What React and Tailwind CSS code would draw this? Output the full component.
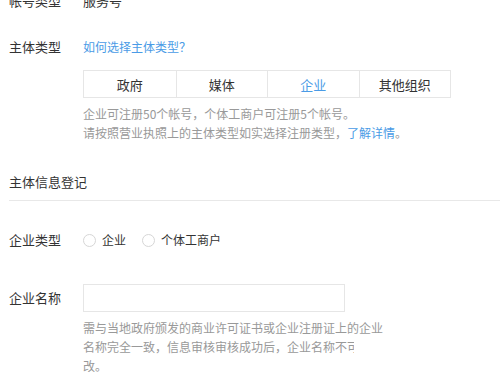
import React, { useState } from "react";

const font = { fontFamily: '"Noto Sans CJK SC", "Noto Sans", sans-serif' };

export default function App() {
  const [subject, setSubject] = useState("企业");
  const [companyType, setCompanyType] = useState("");
  const [companyName, setCompanyName] = useState("");

  const subjectOptions = ["政府", "媒体", "企业", "其他组织"];
  const typeOptions = ["企业", "个体工商户"];

  return (
    <div
      className="h-[391px] w-[500px] overflow-hidden bg-white pl-[9px] text-[#333]"
      style={font}
    >
      <div className="-mt-[9px]">
        {/* 帐号类型 */}
        <div className="flex text-[13px] leading-[20px]">
          <div className="w-[74px] shrink-0">帐号类型</div>
          <div>服务号</div>
        </div>

        {/* 主体类型 */}
        <div className="mt-[26px] flex text-[13px] leading-[20px]">
          <div className="w-[74px] shrink-0">主体类型</div>
          <a className="cursor-pointer text-[12px] text-[#4a9be6]">
            如何选择主体类型？
          </a>
        </div>

        <div className="ml-[74px] mt-[13px]">
          <div className="grid h-[28px] w-[368px] grid-cols-4 border border-[#e6e6e6] text-[13px]">
            {subjectOptions.map((opt, i) => (
              <button
                key={opt}
                onClick={() => setSubject(opt)}
                className={
                  "flex items-center justify-center leading-none " +
                  (i > 0 ? "border-l border-[#e6e6e6] " : "") +
                  (subject === opt ? "text-[#4a9be6]" : "text-[#333]")
                }
              >
                {opt}
              </button>
            ))}
          </div>
          <div className="mt-[6px] text-[12px] leading-[19px] text-[#999]">
            <p>企业可注册50个帐号，个体工商户可注册5个帐号。</p>
            <p>
              请按照营业执照上的主体类型如实选择注册类型，
              <a className="cursor-pointer text-[#4a9be6]">了解详情</a>。
            </p>
          </div>
        </div>

        {/* 主体信息登记 */}
        <div className="mt-[30px] text-[13px] leading-[20px]">主体信息登记</div>
        <div className="mt-[8px] h-px bg-[#e8e8e8]" />

        {/* 企业类型 */}
        <div className="mt-[29px] flex items-center text-[13px] leading-[20px]">
          <div className="w-[74px] shrink-0">企业类型</div>
          <div className="flex items-center gap-[16px] text-[12px]">
            {typeOptions.map((opt) => (
              <label
                key={opt}
                className="flex cursor-pointer items-center gap-[6px]"
                onClick={() => setCompanyType(opt)}
              >
                <span className="flex h-[13px] w-[13px] items-center justify-center rounded-full border border-[#d6d6d6]">
                  {companyType === opt && (
                    <span className="h-[7px] w-[7px] rounded-full bg-[#4a9be6]" />
                  )}
                </span>
                {opt}
              </label>
            ))}
          </div>
        </div>

        {/* 企业名称 */}
        <div className="mt-[34px] flex items-center text-[13px]">
          <div className="w-[74px] shrink-0">企业名称</div>
          <input
            value={companyName}
            onChange={(e) => setCompanyName(e.target.value)}
            className="h-[28px] w-[262px] border border-[#e6e6e6] px-2 text-[12px] outline-none"
          />
        </div>
        <div className="ml-[74px] mt-[6px] text-[12px] leading-[19px] text-[#999]">
          <p className="whitespace-nowrap">需与当地政府颁发的商业许可证书或企业注册证上的企业</p>
          <p className="w-[271px] overflow-hidden whitespace-nowrap">
            名称完全一致，信息审核审核成功后，企业名称不可修
          </p>
          <p>改。</p>
        </div>
      </div>
    </div>
  );
}
